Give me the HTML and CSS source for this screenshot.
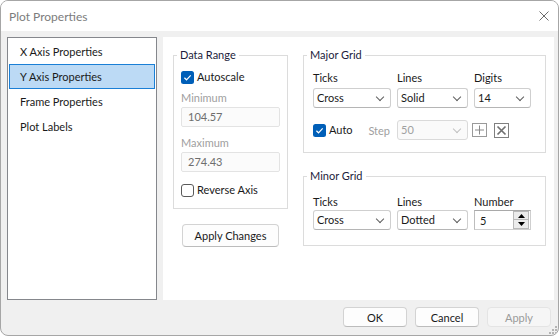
FILE: index.html
```html
<html>

<head>
    <link rel="stylesheet" href="styles.css">
</head>

<body>
    <div class="win">

        <!-- title bar -->
        <div class="titlebar">
            <div class="title">Plot Properties</div>
            <svg class="close" width="10" height="10" viewBox="0 0 10 10">
                <path d="M0.5 0.5 L9.5 9.5 M9.5 0.5 L0.5 9.5" stroke="#6c6c6c" stroke-width="1" fill="none"/>
            </svg>
        </div>

        <div class="body">
            <!-- page list -->
            <ul class="pages">
                <li>X Axis Properties</li>
                <li class="sel">Y Axis Properties</li>
                <li>Frame Properties</li>
                <li>Plot Labels</li>
            </ul>

            <!-- page content -->
            <div class="panel">
                <div class="col-left">
                    <fieldset class="grp range">
                        <legend>Data Range</legend>
                        <div class="grp-in">
                            <label class="chk first">
                                <svg width="13" height="13" viewBox="0 0 13 13"><rect x="0" y="0" width="13" height="13" rx="2.5" fill="#005fb8"/><path d="M3.4 6.8 L5.5 8.8 L9.7 4.3" stroke="#fff" stroke-width="1.2" fill="none"/></svg>
                                Autoscale
                            </label>
                            <div class="lbl dim gap-a">Minimum</div>
                            <div class="inp dis">104.57</div>
                            <div class="lbl dim gap-b">Maximum</div>
                            <div class="inp dis">274.43</div>
                            <label class="chk last">
                                <svg width="13" height="13" viewBox="0 0 13 13"><rect x="0.5" y="0.5" width="12" height="12" rx="2.5" fill="#fff" stroke="#5a5a5a"/></svg>
                                Reverse Axis
                            </label>
                        </div>
                    </fieldset>
                    <button class="btn apply-changes">Apply Changes</button>
                </div>

                <div class="col-right">
                    <fieldset class="grp major">
                        <legend>Major Grid</legend>
                        <div class="grp-in">
                            <div class="cols">
                                <div class="lbl">Ticks</div>
                                <div class="lbl">Lines</div>
                                <div class="lbl">Digits</div>
                                <div class="combo">Cross<i class="chev"></i></div>
                                <div class="combo">Solid<i class="chev"></i></div>
                                <div class="combo">14<i class="chev"></i></div>
                            </div>
                            <div class="auto-row">
                                <div class="auto-left">
                                    <label class="chk">
                                        <svg width="13" height="13" viewBox="0 0 13 13"><rect x="0" y="0" width="13" height="13" rx="2.5" fill="#005fb8"/><path d="M3.4 6.8 L5.5 8.8 L9.7 4.3" stroke="#fff" stroke-width="1.2" fill="none"/></svg>
                                        Auto
                                    </label>
                                    <span class="dim">Step</span>
                                </div>
                                <div class="combo dis step">50<i class="chev"></i></div>
                                <svg class="tool plus" width="15" height="14" viewBox="0 0 15 14">
                                    <rect x="0.5" y="0.5" width="14" height="13" fill="none" stroke="#9a9a9a"/>
                                    <path d="M7.5 2.5 V11.5 M3 7 H12" stroke="#8a8a8a" fill="none"/>
                                </svg>
                                <svg class="tool cross" width="15" height="15" viewBox="0 0 15 15">
                                    <rect x="0.5" y="0.5" width="14" height="14" fill="none" stroke="#808080"/>
                                    <path d="M3.5 3.5 L11.5 11.5 M11.5 3.5 L3.5 11.5" stroke="#707070" stroke-width="1.7" fill="none"/>
                                </svg>
                            </div>
                        </div>
                    </fieldset>

                    <fieldset class="grp minor">
                        <legend>Minor Grid</legend>
                        <div class="grp-in">
                            <div class="cols">
                                <div class="lbl">Ticks</div>
                                <div class="lbl">Lines</div>
                                <div class="lbl">Number</div>
                                <div class="combo">Cross<i class="chev"></i></div>
                                <div class="combo">Dotted<i class="chev"></i></div>
                                <div class="spin">
                                    <span>5</span>
                                    <div class="spin-btns">
                                        <div class="sb"><svg width="7" height="4" viewBox="0 0 7 4"><path d="M0 4 L3.5 0 L7 4 Z" fill="#000"/></svg></div>
                                        <div class="sb"><svg width="7" height="4" viewBox="0 0 7 4"><path d="M0 0 L3.5 4 L7 0 Z" fill="#000"/></svg></div>
                                    </div>
                                </div>
                            </div>
                        </div>
                    </fieldset>
                </div>
            </div>
        </div>

        <!-- dialog buttons -->
        <div class="footer">
            <button class="btn">OK</button>
            <button class="btn">Cancel</button>
            <button class="btn" disabled>Apply</button>
        </div>

        <svg class="grip" width="9" height="9" viewBox="0 0 9 9">
            <g fill="#b4b4b4">
                <rect x="7" y="1" width="2" height="2"/>
                <rect x="4" y="4" width="2" height="2"/><rect x="7" y="4" width="2" height="2"/>
                <rect x="1" y="7" width="2" height="2"/><rect x="4" y="7" width="2" height="2"/><rect x="7" y="7" width="2" height="2"/>
            </g>
        </svg>
    </div>
</body>

</html>
```

FILE: styles.css
```css
* {
    box-sizing: border-box;
}

body {
    margin: 0;
    background: #fff;
    font-family: Lato, "Liberation Sans", sans-serif;
    font-size: 11px;
    color: #1a1a1a;
}

.win {
    position: relative;
    width: 559px;
    height: 336px;
    display: flex;
    flex-direction: column;
    border: 1px solid #a6a6a6;
    border-radius: 8px;
    background: #f0f0f0;
    overflow: hidden;
}

/* title bar */
.titlebar {
    height: 30px;
    flex: none;
    display: flex;
    align-items: center;
    background: #fff;
    padding: 0 9px 0 8px;
}
.titlebar .title {
    flex: 1;
    font-size: 12px;
    color: #7c7c7c;
}

.body {
    flex: 1;
    display: flex;
    padding: 6px 4px 0 6px;
}

/* page list */
.pages {
    width: 150px;
    height: 263px;
    margin: 0;
    padding: 1px 1px 0 1px;
    list-style: none;
    border: 1px solid #85878c;
    background: #fff;
}
.pages li {
    height: 25px;
    line-height: 23px;
    padding-left: 10px;
    border: 1px solid transparent;
}
.pages li.sel {
    background: #bcdaf5;
    border-color: #1a7fd6;
}

/* content */
.panel {
    flex: 1;
    height: 263px;
    margin-left: 6px;
    background: #fff;
    display: flex;
    gap: 15px;
    padding: 10px 0 0 10px;
}
.col-left {
    width: 115px;
    display: flex;
    flex-direction: column;
}
.col-right {
    width: 243px;
    display: flex;
    flex-direction: column;
    gap: 15px;
}

.grp {
    margin: 0;
    padding: 0;
    border: 1px solid #dcdcdc;
    min-width: 0;
}
.grp legend {
    margin-left: 3px;
    padding: 0 3px;
    line-height: 16px;
    color: #1c1c3c;
}
.lbl {
    line-height: 16px;
}
.dim {
    color: #a0a0a0;
}

.chk {
    display: flex;
    align-items: center;
    gap: 3px;
    height: 16px;
    line-height: 16px;
}
.chk svg {
    flex: none;
}

/* data range */
.range .grp-in {
    padding: 0 7px 10px 7px;
}
.range .chk.first {
    margin-top: 6px;
}
.range .chk.last {
    margin-top: 10px;
}
.gap-a {
    margin-top: 5px;
}
.gap-b {
    margin-top: 8px;
}
.inp {
    height: 20px;
    margin-top: 1px;
    line-height: 18px;
    padding-left: 6px;
    border: 1px solid #e3e3e3;
    border-radius: 2px;
}
.inp.dis {
    background: #fbfbfb;
    color: #6e6e6e;
}

.btn {
    font-family: inherit;
    font-size: 11px;
    color: #1a1a1a;
    height: 20px;
    width: 64px;
    padding: 0;
    background: #fdfdfd;
    border: 1px solid #d3d3d3;
    border-bottom-color: #bcbcbc;
    border-radius: 4px;
}
.btn:disabled {
    background: #f6f6f6;
    border-color: #e4e4e4;
    color: #9a9a9a;
}
.apply-changes {
    align-self: center;
    width: 97px;
    height: 23px;
    margin-top: 15px;
}

/* grid groups */
.major .grp-in {
    padding: 7px 14px 12px 9px;
}
.minor .grp-in {
    padding: 10px 14px 15px 9px;
}
.cols {
    display: grid;
    grid-template-columns: 78px 71px 57px;
    column-gap: 6px;
    row-gap: 2px;
}
.minor .cols {
    row-gap: 0;
}

.combo {
    position: relative;
    height: 20px;
    line-height: 18px;
    padding-left: 3px;
    border: 1px solid #cfcfcf;
    border-bottom-color: #b5b5b5;
    border-radius: 3px;
    background: #fff;
}
.chev {
    position: absolute;
    right: 7px;
    top: 5px;
    width: 6px;
    height: 6px;
    border-right: 1px solid #5f5f5f;
    border-bottom: 1px solid #5f5f5f;
    transform: rotate(45deg);
}
.combo.dis {
    background: #fafafa;
    border-color: #dadada;
    color: #a0a0a0;
}
.combo.dis .chev {
    border-color: #c0c0c0;
}

.auto-row {
    display: flex;
    align-items: center;
    margin-top: 12px;
}
.auto-left {
    width: 78px;
    display: flex;
    justify-content: space-between;
    align-items: center;
    padding-right: 1px;
}
.step {
    width: 71px;
    margin-left: 6px;
}
.tool.plus {
    margin-left: 4px;
}
.tool.cross {
    margin-left: 7px;
}

/* spinner */
.spin {
    height: 20px;
    display: flex;
    align-items: center;
    border: 1px solid #cfcfcf;
    border-top-color: #a9a9a9;
    border-left-color: #bdbdbd;
    background: #fff;
    padding-left: 5px;
}
.spin span {
    flex: 1;
}
.spin-btns {
    display: flex;
    flex-direction: column;
    margin-right: 1px;
}
.sb {
    width: 16px;
    height: 9px;
    display: flex;
    align-items: center;
    justify-content: center;
    background: #ececec;
    border: 1px solid #b9b9b9;
}
.sb + .sb {
    border-top: none;
}

/* footer */
.footer {
    height: 35px;
    flex: none;
    display: flex;
    justify-content: flex-end;
    gap: 8px;
    padding: 7px 7px 0 0;
}

.grip {
    position: absolute;
    right: 1px;
    bottom: 1px;
}
```
